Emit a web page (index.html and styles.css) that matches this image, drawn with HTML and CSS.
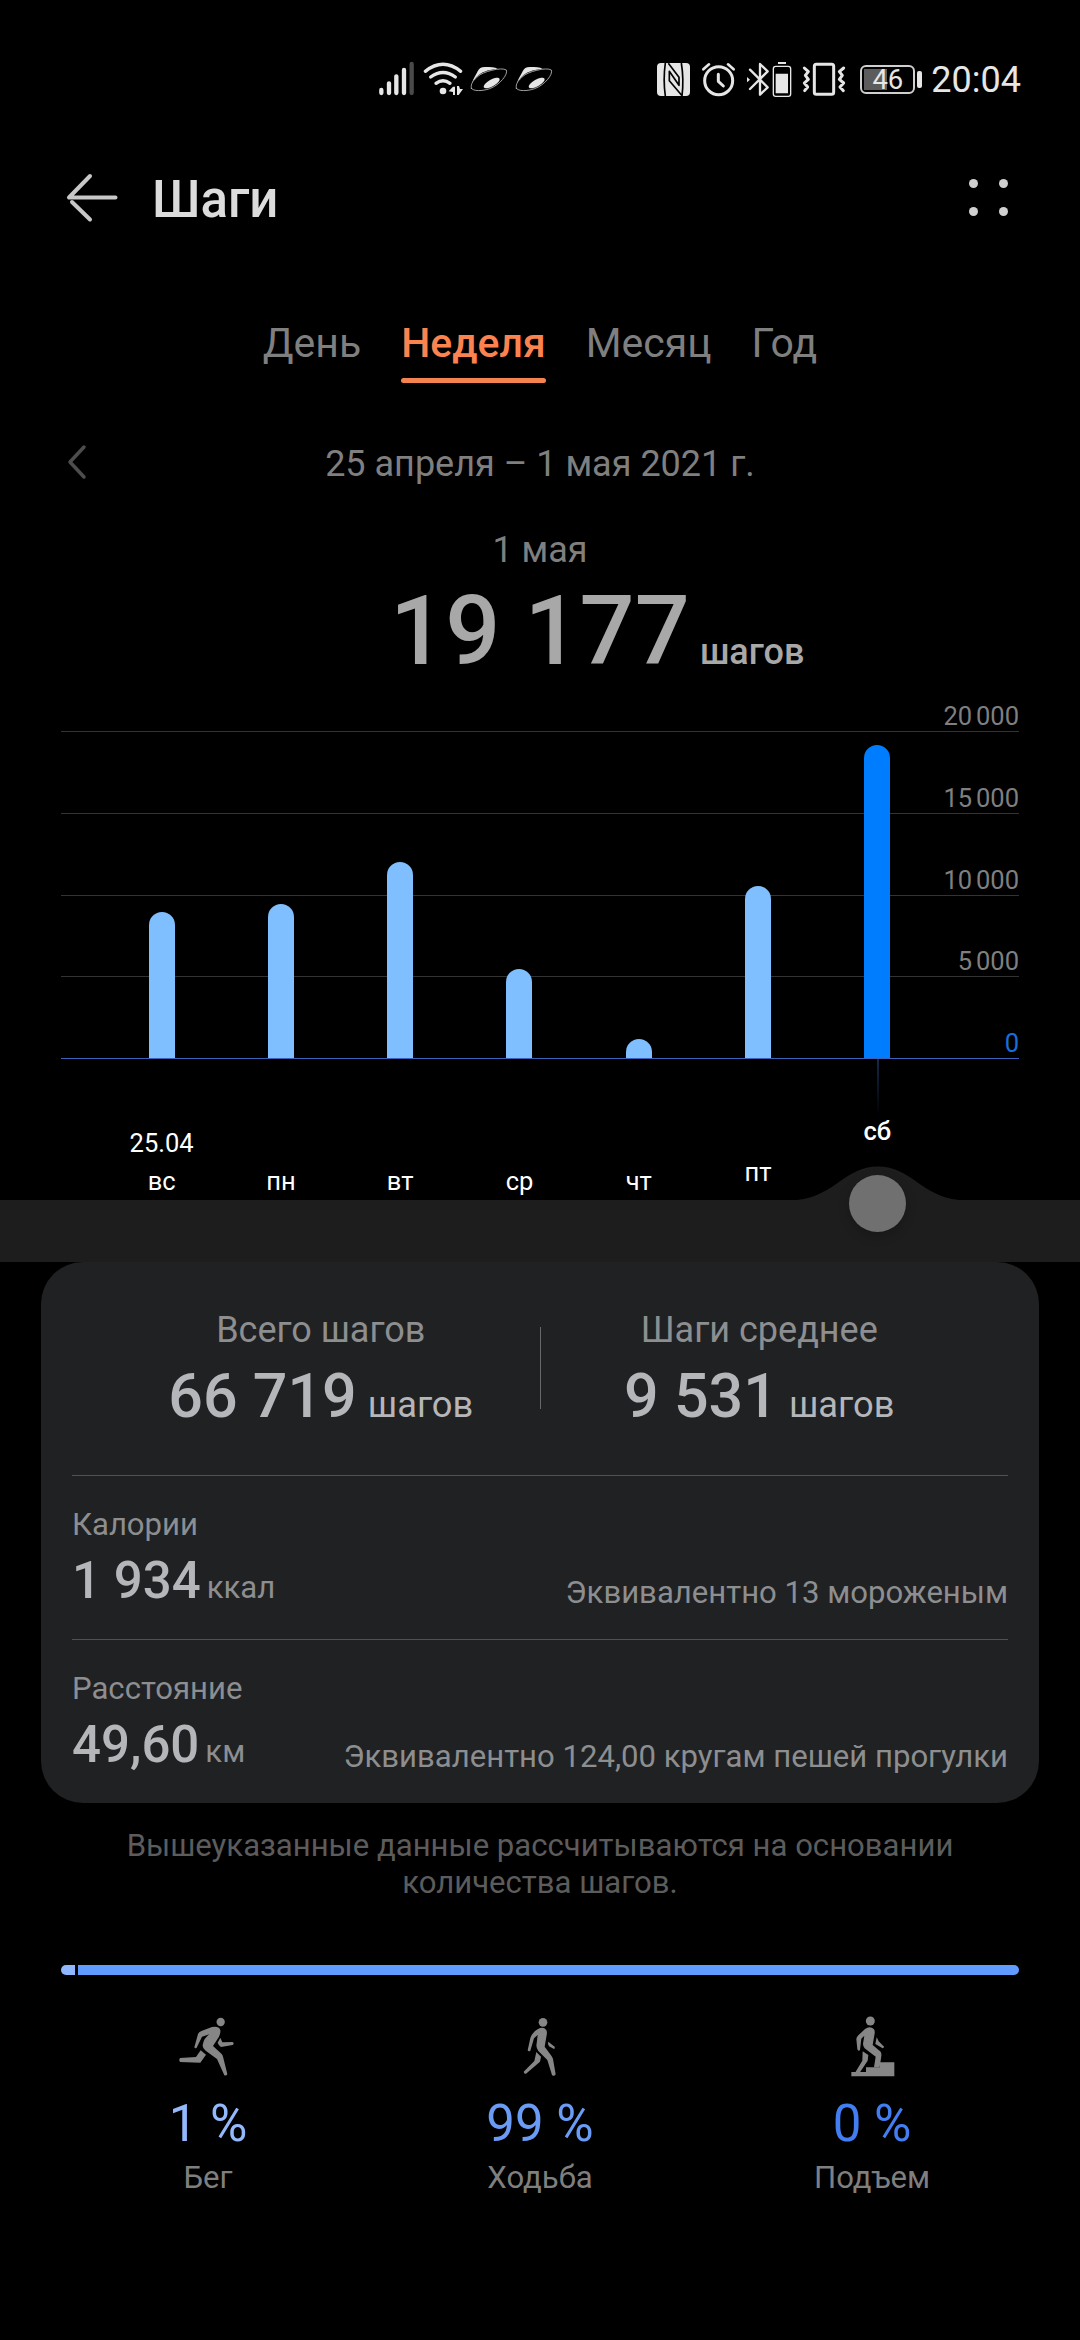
FILE: index.html
```html
<!DOCTYPE html>
<html lang="ru">
<head>
    <meta charset="UTF-8">
    <meta name="viewport" content="width=device-width, initial-scale=1.0">
    <title>Шаги</title>
    <link rel="stylesheet" href="styles.css">
</head>
<body>
    <div class="status">
        <div class="status-left">
            <svg class="signal" width="37" height="36" viewBox="54 63 111 108">
                <path d="M64 150v9M87 130v29M109 109v50M132 90v69"/>
                <path class="weak" d="M155 72v87"/>
            </svg>
            <svg class="wifi" width="41" height="36" viewBox="189 63 123 108">
                <path class="arc" d="M196 94Q249 52 302 94M212 111Q249 84 286 111M228 130Q249 114 270 130"/>
                <circle cx="249" cy="153" r="10"/>
                <path d="M266 154l13-14h6v25h-6v-9zM291 138h6l3 9h9l-13 18h-5z"/>
            </svg>
            <svg class="ufo" width="38" height="36" viewBox="330 63 114 108">
                <path class="ring" d="M334 145c-3-16 8-25 20-36 12-13 70-29 85-19 6 13-20 45-50 56-22 8-50 8-55-1z"/>
                <path d="M336 128c4-12 11-21 17-34 4-9 10-13 22-13 16 0 30 0 38 6-20 0-42 7-56 17-8 7-16 15-21 24z"/>
                <ellipse cx="395" cy="129" rx="27" ry="10" transform="rotate(-29 395 129)"/>
            </svg>
            <svg class="ufo" width="38" height="36" viewBox="330 63 114 108">
                <path class="ring" d="M334 145c-3-16 8-25 20-36 12-13 70-29 85-19 6 13-20 45-50 56-22 8-50 8-55-1z"/>
                <path d="M336 128c4-12 11-21 17-34 4-9 10-13 22-13 16 0 30 0 38 6-20 0-42 7-56 17-8 7-16 15-21 24z"/>
                <ellipse cx="395" cy="129" rx="27" ry="10" transform="rotate(-29 395 129)"/>
            </svg>
        </div>
        <div class="status-right">
            <svg class="nfc" width="34" height="36" viewBox="48 63 102 108">
                <rect x="48" y="69" width="99" height="99" rx="12"/>
                <path d="M73 69Q66 118 73 168M121 69Q129 118 123 168M85 124V94L114 136V112L82 70M85 122L122 166"/>
            </svg>
            <svg class="alarm" width="33" height="36" viewBox="183 63 99 108">
                <circle cx="233" cy="122" r="42"/>
                <path d="M232 103v21l15 14"/>
                <path class="bell" d="M187 88l17-15M278 88l-17-15"/>
            </svg>
            <svg class="bluetooth" width="46" height="36" viewBox="315 63 138 108">
                <path d="M327 89l53 53-23 22V72l23 22-53 53"/>
                <path class="solid" d="M318 111l9 8-9 8zM404 101h37v59h-37zM411 66h24v6h-24z"/>
                <rect class="frame" x="397" y="79" width="52" height="90" rx="7"/>
            </svg>
            <svg class="vibrate" width="44" height="36" viewBox="483 63 132 108">
                <rect x="520" y="73" width="58" height="90" rx="6"/>
                <path d="M490 84l12 11-9 11 9 12-12 11 10 12-9 11M608 84l-13 11 9 11-9 12 13 11-11 12 10 11"/>
            </svg>
            <div class="battery"><span class="battery-level"></span><span class="battery-text">46</span></div>
            <span class="time">20:04</span>
        </div>
    </div>

    <div class="header">
        <svg class="back" width="54" height="50" viewBox="64 172 54 50">
            <path d="M90 176L69 197.5H115.500M72 202L90 219.500"/>
        </svg>
        <h1>Шаги</h1>
        <div class="menu"><i></i><i></i><i></i><i></i></div>
    </div>

    <div class="tabs">
        <div class="tab">День</div>
        <div class="tab active">Неделя</div>
        <div class="tab">Месяц</div>
        <div class="tab">Год</div>
    </div>

    <div class="period">
        <svg class="prev" width="20" height="36" viewBox="0 0 20 36"><path d="M17 3L3 18l14 15"/></svg>
        <span>25 апреля – 1 мая 2021 г.</span>
    </div>

    <div class="day">1 мая</div>
    <div class="total">
        <span class="total-value">19 177</span>
        <span class="total-unit">шагов</span>
    </div>

    <div class="chart">
        <div class="grid-row first">20 000</div>
        <div class="grid-row">15 000</div>
        <div class="grid-row">10 000</div>
        <div class="grid-row">5 000</div>
        <div class="grid-row zero">0</div>
        <div class="bars">
            <div class="bar" style="height: 146px"></div>
            <div class="bar" style="height: 154px"></div>
            <div class="bar" style="height: 196px"></div>
            <div class="bar" style="height: 89px"></div>
            <div class="bar" style="height: 19px"></div>
            <div class="bar" style="height: 172px"></div>
            <div class="bar selected" style="height: 313px"></div>
        </div>
    </div>
    <div class="days">
        <div>25.04<br>вс</div>
        <div>пн</div>
        <div>вт</div>
        <div>ср</div>
        <div>чт</div>
        <div class="near">пт</div>
        <div class="current">сб</div>
    </div>
    <div class="slider">
        <svg class="bump" width="162" height="35" viewBox="0 0 162 35"><path d="M0 35C38 31 48 1.500 81 1.500S124 31 162 35z"/></svg>
        <div class="knob"></div>
    </div>

    <div class="card">
        <div class="summary">
            <div class="summary-item">
                <div class="summary-label">Всего шагов</div>
                <div class="summary-value"><b>66 719</b><span>шагов</span></div>
            </div>
            <div class="divider"></div>
            <div class="summary-item">
                <div class="summary-label">Шаги среднее</div>
                <div class="summary-value"><b>9 531</b><span>шагов</span></div>
            </div>
        </div>
        <div class="metric">
            <div>
                <div class="metric-label">Калории</div>
                <div class="metric-value"><b>1 934</b><span>ккал</span></div>
            </div>
            <div class="metric-note">Эквивалентно 13 мороженым</div>
        </div>
        <div class="metric">
            <div>
                <div class="metric-label">Расстояние</div>
                <div class="metric-value"><b>49,60</b><span>км</span></div>
            </div>
            <div class="metric-note">Эквивалентно 124,00 кругам пешей прогулки</div>
        </div>
    </div>

    <p class="note">Вышеуказанные данные рассчитываются на основании<br>количества шагов.</p>

    <div class="split">
        <div class="split-run"></div>
        <div class="split-walk"></div>
    </div>

    <div class="activities">
        <div class="activity run">
            <svg width="60" height="62" viewBox="414 645 180 186">
                <circle cx="542" cy="666" r="12.500"/>
                <path d="M463 742L474 702Q477 695 486 692L516 681Q536 677 541 690 542 700 537 710L519 738 545 762Q548 766 549 770L562 822Q560 828 553 826L531 777 497 752Q485 744 489 731 492 715 508 703L486 710 470 743Q466 747 463 742z"/>
                <path d="M482 751L498 764 481 788 420 786Q415 780 420 774L468 771zM541 713L547 727 578 726Q584 731 578 735L543 741Q535 735 533 728z"/>
            </svg>
            <div class="percent">1 %</div>
            <div class="name">Бег</div>
        </div>
        <div class="activity walk">
            <svg width="60" height="62" viewBox="0 30 180 186">
                <circle cx="99" cy="52" r="13"/>
                <path d="M53 136L61 99Q68 80 84 72 100 63 109 75 112 82 110 90L104 125 124 152Q128 157 129 162L137 208Q132 216 126 210L112 165 85 138Q77 128 80 115L83 90 72 100 61 137Q56 141 53 136z"/>
                <path d="M79 141L93 155 90 170 48 206Q41 207 41 200L73 168zM115 110L134 125Q136 130 132 132L117 124Q112 118 115 110z"/>
            </svg>
            <div class="percent">99 %</div>
            <div class="name">Ходьба</div>
        </div>
        <div class="activity climb">
            <svg width="60" height="62" viewBox="906 645 180 186">
                <circle cx="991" cy="663" r="13.500"/>
                <path d="M952 748L949 717Q949 712 955 706L975 687Q990 676 1002 688 1006 694 1003 706L998 735 1022 755Q1025 760 1024 768L1019 802H1002L1007 770 974 745Q967 738 970 725L973 707 964 716 960 750Q955 755 952 748z"/>
                <path d="M968 754L985 765 983 782 960 817H946L967 782zM1010 712L1016 724 1033 741 1028 745 1006 732z"/>
                <path d="M934 816H978V802H1020V787H1063V829H934z"/>
            </svg>
            <div class="percent">0 %</div>
            <div class="name">Подъем</div>
        </div>
    </div>
</body>
</html>
```
FILE: styles.css
```css
* {
    box-sizing: border-box;
}
body {
    margin: 0;
    width: 1080px;
    height: 2340px;
    overflow: hidden;
    background-color: black;
    color: #7f7f7f;
    font-family: Roboto, "Noto Sans", sans-serif;
}
svg {
    display: block;
    overflow: visible;
}

/* status bar */
.status {
    display: flex;
    justify-content: space-between;
    height: 158px;
    padding: 0 59px 0 378px;
}
.status-left,
.status-right {
    display: flex;
    align-items: center;
}
.status svg {
    fill: none;
    stroke: #e6e6e6;
    stroke-linecap: round;
    stroke-linejoin: round;
}
.status .signal {
    stroke-width: 13;
    margin-right: 8px;
}
.signal .weak {
    stroke: #4a4a4a;
}
.status .wifi {
    fill: #e6e6e6;
    stroke: none;
    margin-right: 6px;
}
.wifi .arc {
    fill: none;
    stroke: #e6e6e6;
    stroke-width: 10;
}
.status .ufo {
    fill: #e6e6e6;
    stroke: none;
    margin-right: 7px;
}
.ufo .ring {
    fill: none;
    stroke: #bdbdbd;
    stroke-width: 2.5;
}
.status .nfc {
    stroke: black;
    stroke-width: 5;
    stroke-linecap: butt;
    margin-right: 11px;
}
.nfc rect {
    fill: #e6e6e6;
    stroke: none;
}
.status .alarm {
    stroke-width: 9;
    margin-right: 11px;
}
.alarm .bell {
    stroke-width: 8;
}
.status .bluetooth {
    stroke-width: 7;
    margin-right: 10px;
}
.bluetooth .solid {
    fill: #e6e6e6;
    stroke: none;
}
.bluetooth .frame {
    stroke-width: 4;
}
.status .vibrate {
    stroke-width: 9;
    margin-right: 14px;
}
.battery {
    position: relative;
    width: 55px;
    height: 29px;
    margin-right: 16px;
    border: 2px solid #cfcfcf;
    border-radius: 6px;
}
.battery::after {
    content: "";
    position: absolute;
    right: -9px;
    top: 4px;
    width: 5px;
    height: 17px;
    border-radius: 2px;
    background-color: #e6e6e6;
}
.battery-level {
    position: absolute;
    left: 2px;
    top: 2px;
    width: 23px;
    height: 21px;
    background-color: #5c5c5c;
}
.battery-text {
    position: relative;
    display: block;
    color: #e6e6e6;
    font-size: 27.5px;
    line-height: 26px;
    text-align: center;
}
.time {
    margin-top: 2px;
    color: #e6e6e6;
    font-size: 36px;
    line-height: 40px;
}

/* header */
.header {
    display: flex;
    align-items: center;
    height: 78px;
    padding: 0 72px 0 64px;
}
.back {
    fill: none;
    stroke: #c8c8c8;
    stroke-width: 4;
    stroke-linecap: round;
    stroke-linejoin: round;
}
h1 {
    flex: 1;
    margin: 5px 0 0 34px;
    color: #dcdcdc;
    font-size: 51px;
    font-weight: 500;
    line-height: 60px;
}
.menu {
    display: grid;
    grid-template-columns: 9px 9px;
    gap: 19px 21px;
}
.menu i {
    height: 9px;
    border-radius: 50%;
    background-color: #d0d0d0;
}

/* tabs */
.tabs {
    display: flex;
    justify-content: center;
    gap: 40px;
    margin-top: 82px;
    height: 65px;
    font-size: 41px;
    line-height: 50px;
}
.tab.active {
    color: #fb8350;
    font-weight: 500;
}
.tab.active::after {
    content: "";
    display: block;
    height: 5px;
    margin-top: 10px;
    border-radius: 3px;
    background-color: #f5834f;
}

.period {
    display: flex;
    align-items: center;
    justify-content: center;
    height: 50px;
    margin-top: 55px;
    padding: 0 67px;
    font-size: 36px;
}
.period span {
    flex: 1;
    margin: 1px 20px 0 0;
    text-align: center;
}
.prev {
    margin-bottom: 3px;
    fill: none;
    stroke: #4d4d4d;
    stroke-width: 3.5;
    stroke-linecap: round;
    stroke-linejoin: round;
}
.day {
    margin-top: 37px;
    font-size: 36px;
    line-height: 50px;
    text-align: center;
}
.total {
    display: grid;
    grid-template-columns: 1fr auto 1fr;
    align-items: baseline;
    height: 100px;
    margin-top: 6px;
    color: #a8a8a8;
    font-weight: 500;
}
.total-value {
    grid-column: 2;
    font-size: 97px;
    line-height: 100px;
}
.total-unit {
    margin-left: 10px;
    font-size: 36px;
    line-height: 40px;
}

/* weekly chart */
.chart {
    position: relative;
    height: 378px;
    margin: 0 61px;
}
.grid-row {
    display: flex;
    align-items: flex-end;
    justify-content: flex-end;
    height: 81.8px;
    border-bottom: 1px solid #333;
    font-size: 25.5px;
    line-height: 30px;
    word-spacing: -2.5px;
}
.grid-row.first {
    height: 51px;
}
.grid-row.zero {
    color: #1a6fd6;
    border-color: #3a62b8;
}
.bars {
    position: absolute;
    left: 41px;
    bottom: 1px;
    width: 835px;
    display: grid;
    grid-template-columns: repeat(7, 1fr);
    align-items: end;
    justify-items: center;
}
.bar {
    width: 26px;
    border-radius: 13px 13px 0 0;
    background-color: #80bfff;
}
.bar.selected {
    background-color: #007dff;
}
.days {
    display: grid;
    grid-template-columns: repeat(7, 1fr);
    align-items: end;
    height: 141px;
    width: 835px;
    margin-left: 102px;
    color: white;
    font-size: 25.5px;
    line-height: 38px;
    text-align: center;
}
.days .near {
    padding-bottom: 9px;
}
.days .current {
    position: relative;
    padding-bottom: 50px;
    font-weight: 500;
}
.days .current::before {
    content: "";
    position: absolute;
    left: 59px;
    bottom: 85px;
    width: 2px;
    height: 56px;
    background: linear-gradient(#15294a, black);
}
.slider {
    position: relative;
    height: 62px;
    background-color: #1d1d1d;
}
.bump {
    position: absolute;
    left: 797px;
    top: -35px;
    fill: #1d1d1d;
}
.knob {
    position: absolute;
    left: 849px;
    top: -25px;
    width: 57px;
    height: 57px;
    border-radius: 50%;
    background-color: #707070;
    box-shadow: 0 4px 12px rgba(0, 0, 0, 0.2);
}

/* totals card */
.card {
    height: 541px;
    margin: 0 41px;
    padding: 0 31px;
    border-radius: 42px;
    background-color: #202123;
    color: #8d8e90;
}
.summary {
    display: flex;
    height: 213px;
    padding: 46px 30px 0;
}
.summary-item {
    flex: 1;
    text-align: center;
}
.summary-label {
    font-size: 36px;
    line-height: 44px;
}
.summary-value {
    display: flex;
    align-items: baseline;
    justify-content: center;
    margin-top: 9px;
    color: #b5b6b9;
    font-size: 36.3px;
    line-height: 36px;
}
.summary-value b {
    margin-right: 11px;
    font-size: 61px;
    font-weight: 500;
    line-height: 70px;
}
.divider {
    width: 1px;
    height: 82px;
    margin-top: 19px;
    background-color: #66676a;
}
.metric {
    display: flex;
    justify-content: space-between;
    height: 164px;
    padding-top: 29px;
    border-top: 1px solid #505153;
    font-size: 31.1px;
    line-height: 40px;
}
.metric-value {
    display: flex;
    align-items: baseline;
    margin-top: 6px;
}
.metric-value b {
    margin-right: 6px;
    color: #b5b6b9;
    font-size: 51px;
    font-weight: 500;
    line-height: 60px;
}
.metric-note {
    align-self: flex-end;
    margin-bottom: 26px;
}
.note {
    margin: 24px 0 0;
    color: #5c5c5c;
    font-size: 31.1px;
    line-height: 37px;
    text-align: center;
}

/* activity split */
.split {
    display: flex;
    gap: 3px;
    height: 10px;
    margin: 64px 61px 0;
    border-radius: 5px;
    overflow: hidden;
}
.split-run {
    width: 14px;
    background-color: #8fb7ff;
}
.split-walk {
    flex: 1;
    background-color: #609bff;
}
.activities {
    display: grid;
    grid-template-columns: repeat(3, 332px);
    justify-content: center;
    margin-top: 40px;
    text-align: center;
}
.activity svg {
    margin: 0 auto;
    fill: #868686;
}
.percent {
    margin-top: 17px;
    font-size: 51px;
    line-height: 60px;
}
.run .percent {
    color: #93b8fb;
}
.walk .percent {
    color: #6a9bf5;
}
.climb .percent {
    color: #437df2;
}
.name {
    margin-top: 4px;
    font-size: 31.1px;
    line-height: 40px;
}
```
